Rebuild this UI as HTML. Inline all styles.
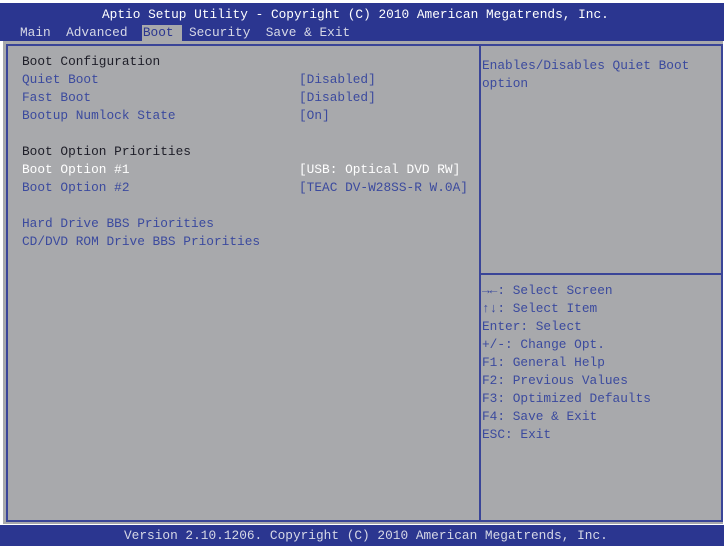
<!DOCTYPE html>
<html><head><style>
body{margin:0;width:726px;height:546px;background:#fff;overflow:hidden;font-family:"Liberation Mono","DejaVu Sans Mono",monospace;font-size:12.8px;}
.top{position:absolute;left:0;top:3px;width:724px;height:38px;background:#2b3690;}
.bot{position:absolute;left:0;top:525px;width:724px;height:21px;background:#2b3690;}
.gray{position:absolute;left:3px;top:41px;width:720px;height:483px;background:#a8a9ac;}
.frame{position:absolute;left:6px;top:44px;width:713px;height:474px;border:2px solid #3a4598;}
.vl{position:absolute;left:479px;top:44px;width:2px;height:478px;background:#3a4598;}
.hl{position:absolute;left:479px;top:273px;width:242px;height:2px;background:#3a4598;}
.t{position:absolute;white-space:pre;line-height:18px;}
.w{color:#fff}.b{color:#3b4a9e}.k{color:#1e1e28}.s{color:#d6d8e6}
</style></head><body>
<div class="top"></div><div class="bot"></div>
<div class="gray"></div><div class="frame"></div><div class="vl"></div><div class="hl"></div>
<div class="t w" style="left:102px;top:6px">Aptio Setup Utility - Copyright (C) 2010 American Megatrends, Inc.</div>
<div style="position:absolute;left:142px;top:25px;width:40px;height:16px;background:#a8a9ac"></div>
<div class="t s" style="left:20px;top:24px">Main  Advanced  <span style="color:#2b3690">Boot</span>  Security  Save &amp; Exit</div>
<div class="t k" style="left:22px;top:53px">Boot Configuration</div>
<div class="t b" style="left:22px;top:71px">Quiet Boot</div>
<div class="t b" style="left:22px;top:89px">Fast Boot</div>
<div class="t b" style="left:22px;top:107px">Bootup Numlock State</div>
<div class="t b" style="left:299px;top:71px">[Disabled]</div>
<div class="t b" style="left:299px;top:89px">[Disabled]</div>
<div class="t b" style="left:299px;top:107px">[On]</div>
<div class="t k" style="left:22px;top:143px">Boot Option Priorities</div>
<div class="t w" style="left:22px;top:161px">Boot Option #1</div>
<div class="t b" style="left:22px;top:179px">Boot Option #2</div>
<div class="t w" style="left:299px;top:161px">[USB: Optical DVD RW]</div>
<div class="t b" style="left:299px;top:179px">[TEAC DV-W28SS-R W.0A]</div>
<div class="t b" style="left:22px;top:215px">Hard Drive BBS Priorities</div>
<div class="t b" style="left:22px;top:233px">CD/DVD ROM Drive BBS Priorities</div>
<div class="t b" style="left:482px;top:57px">Enables/Disables Quiet Boot
option</div>
<div class="t b" style="left:482px;top:282px">→←: Select Screen
↑↓: Select Item
Enter: Select
+/-: Change Opt.
F1: General Help
F2: Previous Values
F3: Optimized Defaults
F4: Save &amp; Exit
ESC: Exit</div>
<div class="t s" style="left:124px;top:527px">Version 2.10.1206. Copyright (C) 2010 American Megatrends, Inc.</div>
</body></html>
